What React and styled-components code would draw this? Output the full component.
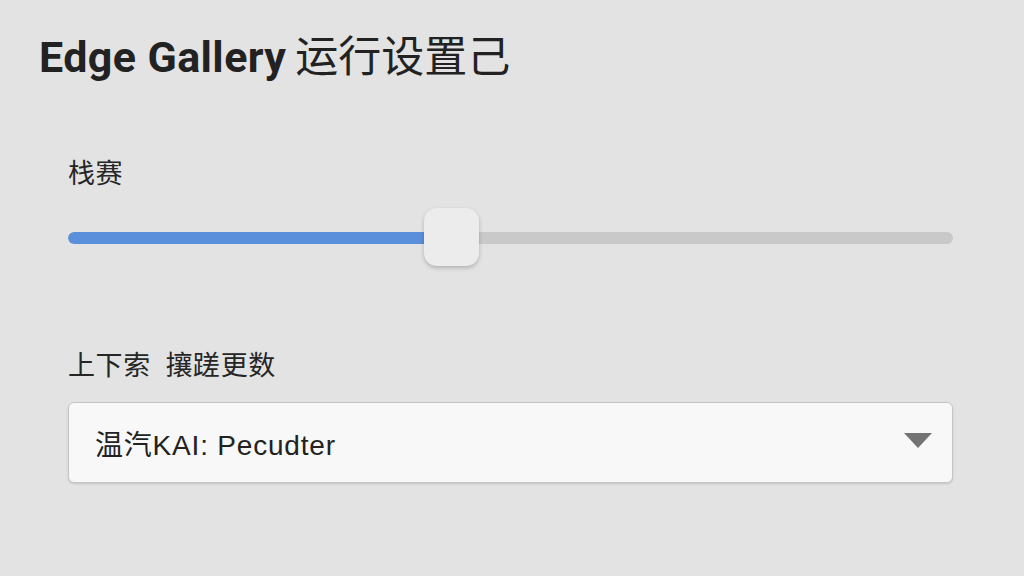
import React from 'react';
import styled, { createGlobalStyle } from 'styled-components';

const GlobalStyle = createGlobalStyle`
  html, body {
    margin: 0;
    padding: 0;
    background: #e3e3e3;
  }
  body {
    font-family: Roboto, "Noto Sans CJK SC", sans-serif;
  }
`;

const Page = styled.div`
  width: 1024px;
  height: 576px;
  box-sizing: border-box;
  padding: 27px 71px 0 68px;
  background: #e3e3e3;
  overflow: hidden;
`;

const Title = styled.h1`
  margin: 0 0 0 -29px;
  font-family: Roboto, "Noto Sans CJK SC", sans-serif;
  font-size: 43px;
  font-weight: 700;
  color: #222;
  line-height: 60px;
  letter-spacing: 0.4px;

  .cjk {
    font-weight: 400;
    margin-left: 9px;
    letter-spacing: 0;
  }
`;

const Label = styled.div`
  font-family: "Noto Sans CJK SC", sans-serif;
  font-size: 27px;
  color: #262626;
  line-height: 32px;
  letter-spacing: 0.6px;
  word-spacing: 8px;
  margin-top: ${p => p.$top}px;
`;

const SliderWrap = styled.div`
  position: relative;
  height: 60px;
  margin-top: 20px;
  display: flex;
  align-items: center;
`;

const Track = styled.div`
  width: 100%;
  height: 12px;
  border-radius: 6px;
  background: #c9c9c9;
  overflow: hidden;
`;

const Fill = styled.div`
  height: 100%;
  background: #5a8fdc;
  border-radius: 6px 0 0 6px;
`;

const Thumb = styled.div`
  position: absolute;
  top: 0;
  width: 55px;
  height: 58px;
  border-radius: 13px;
  background: #ececec;
  box-shadow: 0 2px 4px rgba(0, 0, 0, 0.22);
`;

const Select = styled.div`
  margin-top: 22px;
  height: 81px;
  box-sizing: border-box;
  border: 1px solid #c6c6c6;
  border-radius: 6px;
  background: #f8f8f8;
  box-shadow: 0 1px 2px rgba(0, 0, 0, 0.15);
  display: flex;
  align-items: center;
  justify-content: space-between;
  padding: 0 20px 0 26px;
`;

const SelectText = styled.span`
  font-family: "Liberation Sans", "Noto Sans CJK SC", sans-serif;
  font-size: 28px;
  letter-spacing: 0.8px;
  color: #222;
`;

const Caret = styled.span`
  width: 0;
  height: 0;
  border-left: 14px solid transparent;
  border-right: 14px solid transparent;
  border-top: 15px solid #747474;
  margin-bottom: 4px;
`;

export default function App() {
  const value = 0.405;
  return (
    <>
      <GlobalStyle />
      <Page>
        <Title>
          Edge Gallery<span className="cjk">运行设置己</span>
        </Title>
        <Label $top={69}>栈赛</Label>
        <SliderWrap>
          <Track>
            <Fill style={{ width: `${value * 100}%` }} />
          </Track>
          <Thumb style={{ left: `calc(${value * 100}% - 2px)` }} />
        </SliderWrap>
        <Label $top={80}>上下索 攘蹉更数</Label>
        <Select>
          <SelectText>温汽KAI: Pecudter</SelectText>
          <Caret />
        </Select>
      </Page>
    </>
  );
}
